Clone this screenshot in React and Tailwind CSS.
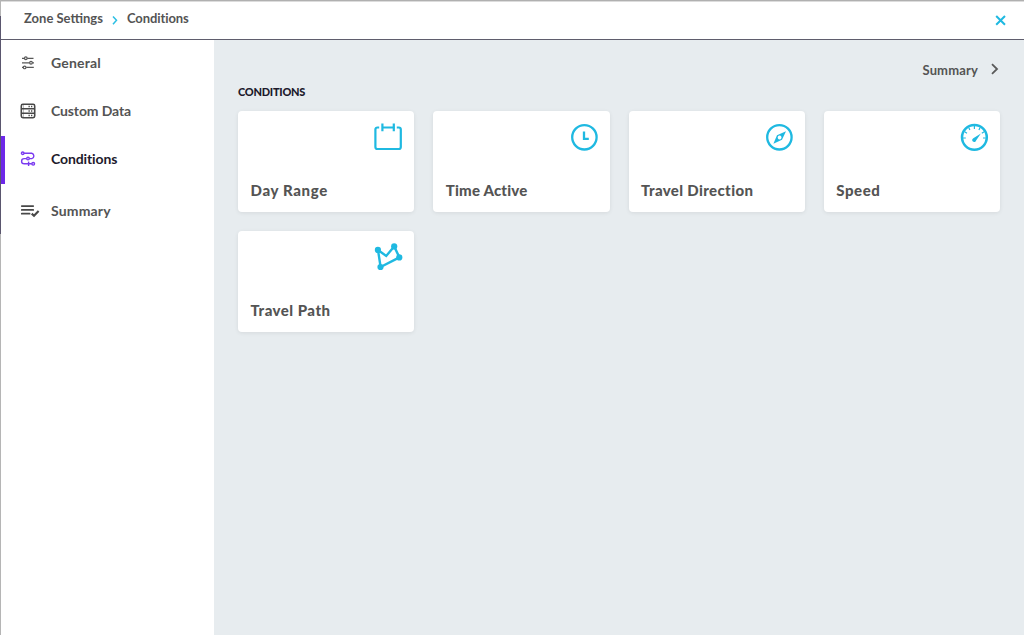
import React from "react";

const SlidersIcon = () => (
  <svg width="14" height="14" viewBox="0 0 14 14" fill="none" stroke="#585858" strokeWidth="1.2">
    <path d="M1 2.3h2.3M6.2 2.3h6.3M1 6.8h7.6M11.4 6.8h1.6M1 11.4h1.2M5.2 11.4h7.6" />
    <circle cx="4.8" cy="2.3" r="1.35" />
    <circle cx="10" cy="6.8" r="1.35" />
    <circle cx="3.6" cy="11.4" r="1.35" />
  </svg>
);

const DataIcon = () => (
  <svg width="16" height="16" viewBox="0 0 16 16" fill="none" stroke="#484848" strokeWidth="1.6">
    <rect x="1.3" y="1.3" width="13.4" height="13.4" rx="1.6" />
    <path d="M1.3 5.7h13.4M1.3 10.3h13.4" />
    <path d="M8.5 3.5h1.3M11 3.5h1.3M8.5 8h1.3M11 8h1.3M8.5 12.5h1.3M11 12.5h1.3" strokeWidth="1.3" />
    <path d="M3.5 1.5v13" strokeWidth="0.7" opacity="0.5" />
  </svg>
);

const ConditionsIcon = () => (
  <svg width="16" height="16" viewBox="0 0 16 16" fill="none" stroke="#7a3af0" strokeWidth="1.4">
    <circle cx="2.7" cy="2.2" r="1.25" />
    <path d="M4 2.2h7.8a2.8 2.8 0 0 1 0 5.4H9.5M6.5 7.6H4.2a2.6 2.6 0 0 0 0 5.2h7.6" />
    <circle cx="8" cy="7.6" r="1.3" />
    <circle cx="13.2" cy="12.8" r="1.35" />
    <path d="M8.6 10.6v4.4" />
  </svg>
);

const SummaryIcon = () => (
  <svg width="20" height="14" viewBox="0 0 20 14" fill="none" stroke="#484848">
    <path d="M1.8 2.1h11.4M1.8 5.9h11.4M1.8 9.7h7.8" strokeWidth="1.8" strokeLinecap="round" />
    <path d="M11.7 9.6l2.3 2.1 4.6-4.8" strokeWidth="2.1" />
  </svg>
);

const CalendarIcon = () => (
  <svg width="30" height="30" viewBox="0 0 30 30" fill="none" stroke="#1fb9e1" strokeWidth="2.2">
    <path d="M6.2 5.5H4.4A2 2 0 0 0 2.4 7.5V25a2 2 0 0 0 2 2H25.8a2 2 0 0 0 2-2V7.5a2 2 0 0 0-2-2H23.8M9.4 5.5h12" />
    <path d="M9.4 1.6v7.6M20.8 1.6v7.6" strokeWidth="2.2" />
  </svg>
);

const ClockIcon = () => (
  <svg width="30" height="30" viewBox="0 0 30 30" fill="none" stroke="#1fb9e1" strokeWidth="2.3">
    <circle cx="15.4" cy="15.3" r="12.2" />
    <path d="M15 9.4v7.4h4.8" />
  </svg>
);

const CompassIcon = () => (
  <svg width="30" height="30" viewBox="0 0 30 30" fill="none" stroke="#1fb9e1" strokeWidth="2.3">
    <circle cx="15.4" cy="15.3" r="12.2" />
    <path fill="#1fb9e1" fillRule="evenodd" stroke="none" d="M22 9.2L18 17.7 9.4 21.7 13 13.2zM15.6 13.6a1.9 1.9 0 1 0 .01 0z" />
  </svg>
);

const GaugeIcon = () => (
  <svg width="30" height="30" viewBox="0 0 30 30" fill="none" stroke="#1fb9e1" strokeWidth="2.5">
    <circle cx="15.4" cy="15.3" r="12.4" />
    <path d="M15.4 4v3M4 16h2.8M24 16h2.8M9.7 5.6l1.2 2.4M21.1 5.6l-1.2 2.4M5.7 9.8l2.3 1.4M25.1 9.8l-2.3 1.4" strokeWidth="1.2" />
    <path d="M21.9 11.6l-4.8 6.9a2 2 0 1 1-2.8-2.3z" fill="#1fb9e1" stroke="none" />
  </svg>
);

const PathIcon = () => (
  <svg width="30" height="30" viewBox="0 0 30 30" fill="#1fb9e1" stroke="#1fb9e1" strokeWidth="2.4">
    <path d="M5 8l8.2 5.9 8-9.5 5.2 11L7.6 25z" fill="none" />
    <g stroke="none">
      <circle cx="4.9" cy="7.9" r="3.1" />
      <circle cx="21.2" cy="4.4" r="3.1" />
      <circle cx="26.3" cy="15.4" r="3.1" />
      <circle cx="7.5" cy="25" r="3.1" />
    </g>
  </svg>
);

const navItems = [
  { label: "General", Icon: SlidersIcon, row: "h-12", pad: "pl-0", text: "text-[#545454] tracking-[0.2px]" },
  { label: "Custom Data", Icon: DataIcon, row: "h-12", pad: "pl-0", text: "text-[#545454] tracking-[-0.12px]" },
  { label: "Conditions", Icon: ConditionsIcon, row: "h-12", pad: "pl-0", text: "text-[#1d1a2c] tracking-[-0.12px]", active: true },
  { label: "Summary", Icon: SummaryIcon, row: "h-14", pad: "pl-[3px]", text: "text-[#545454] tracking-[0.16px]" },
];

const cards = [
  { label: "Day Range", Icon: CalendarIcon, text: "tracking-[0.65px]" },
  { label: "Time Active", Icon: ClockIcon, text: "tracking-[0.2px]" },
  { label: "Travel Direction", Icon: CompassIcon, text: "tracking-[0.36px]" },
  { label: "Speed", Icon: GaugeIcon, text: "tracking-[0.55px]" },
  { label: "Travel Path", Icon: PathIcon, text: "tracking-[0.48px]" },
];

export default function App() {
  return (
    <div className="flex h-[635px] w-[1024px] overflow-hidden bg-white font-['Lato',sans-serif] font-bold text-[#545454]">
      <div className="flex w-px shrink-0 flex-col">
        <div className="h-4 bg-[#b5b5b5]" />
        <div className="h-[218px] bg-[#5a566e]" />
        <div className="flex-1 bg-[#b5b5b5]" />
      </div>
      <div className="flex min-w-0 flex-1 flex-col">
        <div className="h-px shrink-0 bg-[#b0b0b0]" />
        <header className="flex h-[39px] shrink-0 items-center border-t border-b border-t-[#dcdcdc] border-b-[#5f5d6d] pr-[18px] pl-[23px] text-[13px]">
          <span className="w-[79px] pb-[3px] whitespace-nowrap">Zone Settings</span>
          <svg className="mr-[8px] ml-[8px]" width="8" height="12" viewBox="0 0 8 12" fill="none" stroke="#2bbfe4" strokeWidth="1.5">
            <path d="M2 1.4l3.5 3.9L2 9.2" />
          </svg>
          <span className="pb-[3px] tracking-[-0.1px] whitespace-nowrap">Conditions</span>
          <svg className="ml-auto" width="11" height="11" viewBox="0 0 11 11" fill="none" stroke="#1fb9e1" strokeWidth="2">
            <path d="M1.2 1l8.8 8.8M10 1L1.2 9.8" />
          </svg>
        </header>
        <div className="flex min-h-0 flex-1">
          <nav className="flex w-[213px] shrink-0 flex-col">
            {navItems.map(({ label, Icon, row, pad, text, active }) => (
              <div key={label} className={`flex shrink-0 items-center ${row}`}>
                <div className={`h-full w-1 ${active ? "bg-[#6d28e8]" : ""}`} />
                <div className={`flex w-[46px] items-center justify-center pb-[3px] ${pad}`}><Icon /></div>
                <span className={`pb-1 text-[14px] whitespace-nowrap ${text}`}>{label}</span>
              </div>
            ))}
          </nav>
          <main className="min-w-0 flex-1 bg-[#e7ecef] pr-6 pl-6">
            <div className="flex h-[45px] items-end justify-end pb-[5px] text-[13px]">
              <span className="leading-[20px] tracking-[0.16px]">Summary</span>
              <svg className="mb-[4px] ml-[12px]" width="10" height="14" viewBox="0 0 10 14" fill="none" stroke="#5a5a5a" strokeWidth="1.8">
                <path d="M2 2.2l5 4.8-5 4.8" />
              </svg>
            </div>
            <h2 className="h-[26px] text-[11px] leading-[14px] font-black tracking-[-0.25px] text-[#1d1a2c]">CONDITIONS</h2>
            <div className="grid grid-cols-4 gap-x-[19px] gap-y-[19px]">
              {cards.map(({ label, Icon, text }) => (
                <article key={label} className="flex h-[101px] flex-col justify-between rounded-[4px] bg-white pt-[11px] pr-[11px] pb-[12px] pl-[12.5px] shadow-[0_1px_4px_rgba(0,0,0,0.08)]">
                  <div className="self-end"><Icon /></div>
                  <span className={`text-[15px] leading-[20px] font-black whitespace-nowrap ${text}`}>{label}</span>
                </article>
              ))}
            </div>
          </main>
        </div>
      </div>
    </div>
  );
}
